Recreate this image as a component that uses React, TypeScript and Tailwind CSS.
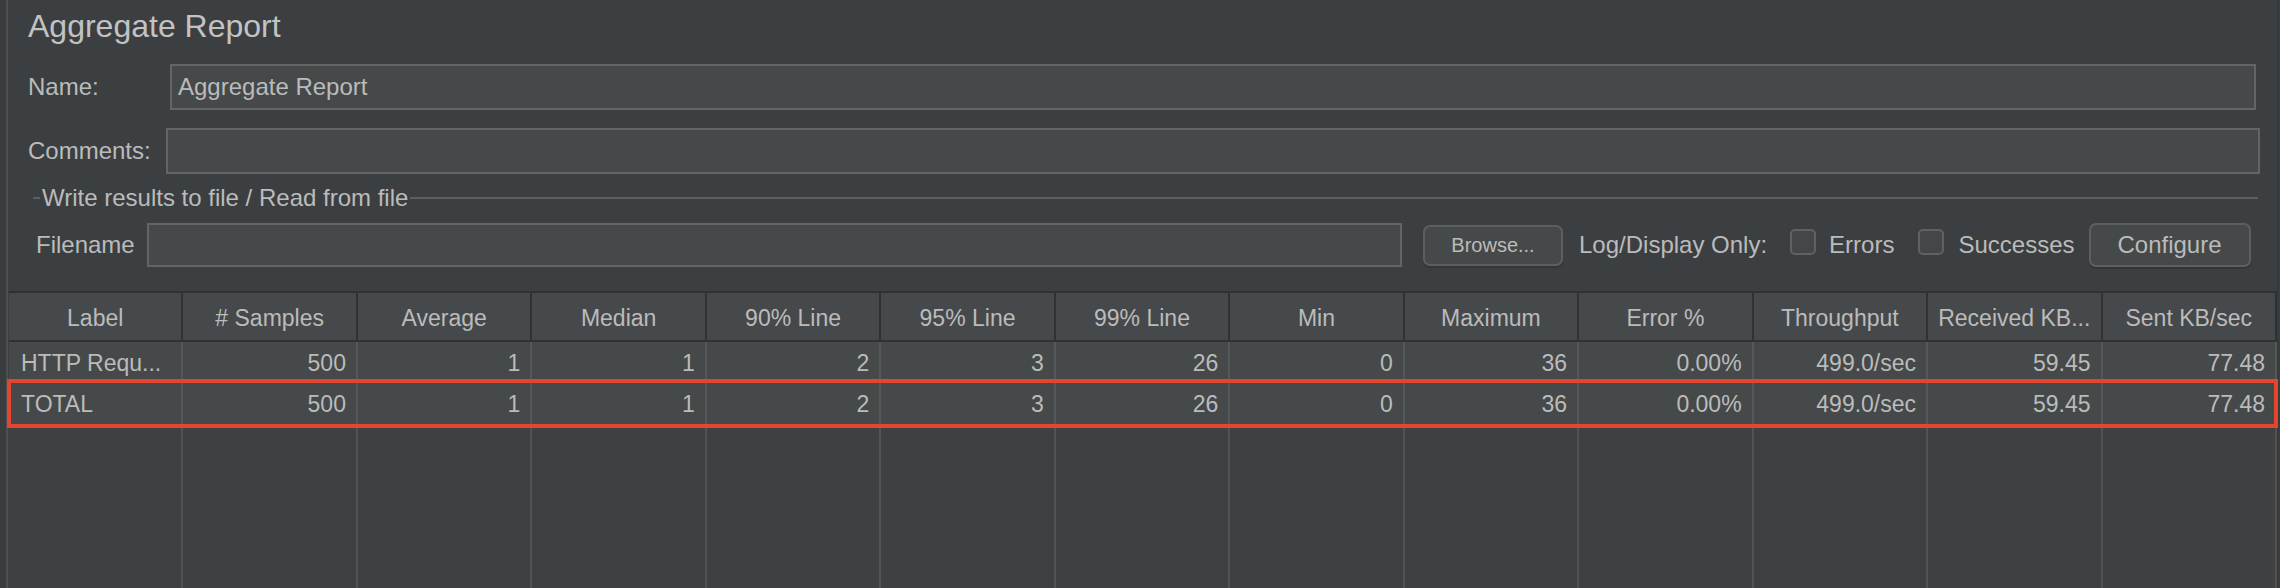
import React from "react";

const headers = [
  "Label",
  "# Samples",
  "Average",
  "Median",
  "90% Line",
  "95% Line",
  "99% Line",
  "Min",
  "Maximum",
  "Error %",
  "Throughput",
  "Received KB...",
  "Sent KB/sec",
];

const rows = [
  ["HTTP Requ...", "500", "1", "1", "2", "3", "26", "0", "36", "0.00%", "499.0/sec", "59.45", "77.48"],
  ["TOTAL", "500", "1", "1", "2", "3", "26", "0", "36", "0.00%", "499.0/sec", "59.45", "77.48"],
];

function Checkbox() {
  return (
    <div className="mb-[6px] h-[26px] w-[26px] shrink-0 rounded-[5px] border-2 border-[#5f6264] bg-[#43474a]" />
  );
}

function Row({ cells, highlight }: { cells: string[]; highlight?: boolean }) {
  return (
    <div className="relative grid grid-cols-[repeat(13,minmax(0,1fr))]">
      {cells.map((c, i) => (
        <div
          key={i}
          className={
            "flex h-[41px] items-center border-r-2 border-[#55585a] bg-[#45494a] pt-[2px] text-[23px] leading-none " +
            (i === 0 ? "justify-start pl-[12px]" : "justify-end pr-[10px]")
          }
        >
          {c}
        </div>
      ))}
      {highlight && (
        <div className="pointer-events-none absolute -bottom-[4px] -left-[2px] -right-[1px] -top-[4px] border-4 border-[#e4452f]" />
      )}
    </div>
  );
}

export default function App() {
  return (
    <div className="flex h-[588px] w-[2280px] overflow-hidden bg-[#3c3f41] font-['Liberation_Sans',Arial,sans-serif] text-[#bbbbbb]">
      <div className="w-[6px] shrink-0 bg-[#3a3c3e]" />
      <div className="w-[2px] shrink-0 bg-[#4c4f51]" />
      <div className="flex min-w-0 flex-1 flex-col">
        <div className="pl-[20px] pt-[8px] text-[32px] leading-[36px] text-[#c3c3c3]">Aggregate Report</div>

        <div className="mt-[20px] flex h-[46px] items-center pl-[20px] pr-[21px]">
          <div className="w-[142px] shrink-0 text-[24px]">Name:</div>
          <div className="flex h-full flex-1 items-center border-2 border-[#646464] bg-[#45494a] pl-[6px] text-[24px]">
            Aggregate Report
          </div>
        </div>

        <div className="mt-[18px] flex h-[46px] items-center pl-[20px] pr-[17px]">
          <div className="w-[138px] shrink-0 text-[24px]">Comments:</div>
          <div className="h-full flex-1 border-2 border-[#646464] bg-[#45494a]" />
        </div>

        <div className="mt-[10px] flex h-[28px] items-center pl-[25px] pr-[19px]">
          <div className="h-[2px] w-[7px] bg-[#5c5f61]" />
          <div className="ml-[2px] text-[24px] leading-[28px]">Write results to file / Read from file</div>
          <div className="ml-[2px] h-[2px] flex-1 bg-[#5c5f61]" />
        </div>

        <div className="mt-[10px] flex h-[46px] items-center pl-[28px]">
          <div className="w-[111px] shrink-0 text-[24px]">Filename</div>
          <div className="h-[44px] w-[1255px] shrink-0 border-2 border-[#646464] bg-[#45494a]" />
          <div className="ml-[21px] flex h-[41px] w-[140px] shrink-0 items-center justify-center rounded-[7px] border-2 border-[#5c5f61] bg-[#45494a] text-[20px] shadow-[0_2px_0_#333537]">
            Browse...
          </div>
          <div className="ml-[16px] text-[24px]">Log/Display Only:</div>
          <div className="ml-[23px]">
            <Checkbox />
          </div>
          <div className="ml-[13px] text-[24px]">Errors</div>
          <div className="ml-[24px]">
            <Checkbox />
          </div>
          <div className="ml-[14px] text-[24px]">Successes</div>
          <div className="ml-[14px] flex h-[44px] w-[162px] shrink-0 items-center justify-center rounded-[7px] border-2 border-[#5c5f61] bg-[#45494a] text-[24px] shadow-[0_2px_0_#333537]">
            Configure
          </div>
        </div>

        <div className="ml-[1px] mt-[23px] flex min-h-0 flex-1 flex-col">
          <div className="grid grid-cols-[repeat(13,minmax(0,1fr))] border-t-2 border-[#2f3133] bg-[#46494b]">
            {headers.map((h) => (
              <div
                key={h}
                className="flex h-[49px] items-center justify-center border-b-2 border-r-2 border-[#2f3133] pt-[4px] text-[23px] leading-none"
              >
                {h}
              </div>
            ))}
          </div>
          <Row cells={rows[0]} />
          <Row cells={rows[1]} highlight />
          <div className="grid flex-1 grid-cols-[repeat(13,minmax(0,1fr))]">
            {headers.map((h) => (
              <div key={h} className="border-r-2 border-[#505355] bg-[#3e4042]" />
            ))}
          </div>
        </div>
      </div>
      <div className="w-[2px] shrink-0 bg-[#36383a]" />
      <div className="w-[1px] shrink-0" />
    </div>
  );
}
